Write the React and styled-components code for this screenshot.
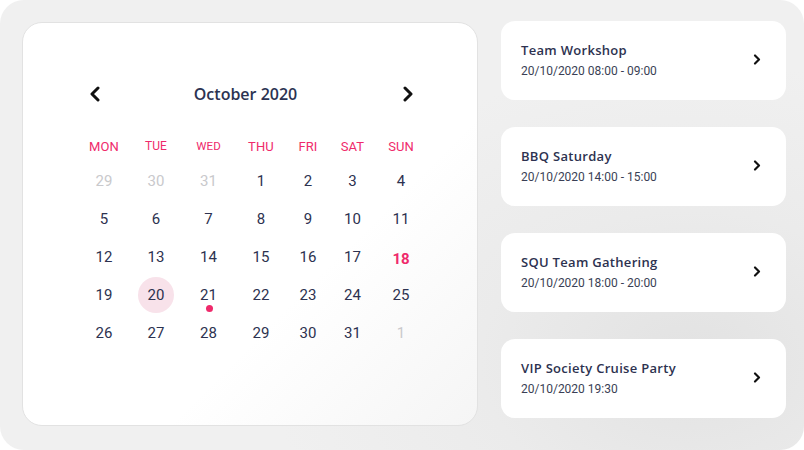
import React from "react";
import styled, { createGlobalStyle, css } from "styled-components";

const GlobalStyle = createGlobalStyle`
  html, body {
    margin: 0;
    padding: 0;
    background: #ffffff;
  }
  * {
    box-sizing: border-box;
  }
`;

const Shell = styled.div`
  width: 804px;
  height: 450px;
  border-radius: 24px;
  display: flex;
  gap: 23px;
  padding: 21px 18px 0 22px;
  background: radial-gradient(
      ellipse 420px 300px at 690px 360px,
      #e2e2e2 0%,
      #ebebeb 50%,
      #f0f0f0 100%
    ),
    #f0f0f0;
  overflow: hidden;
`;

const CalendarCard = styled.div`
  width: 456px;
  height: 404px;
  margin-top: 1px;
  border-radius: 20px;
  border: 1px solid #e2e2e2;
  background: linear-gradient(135deg, #ffffff 0%, #ffffff 64%, #f5f5f5 100%);
  padding: 59px 52px 0 55px;
  display: flex;
  flex-direction: column;
`;

const Header = styled.div`
  display: flex;
  align-items: center;
  justify-content: space-between;
  height: 24px;
  padding: 0 11px 0 11px;
`;

const MonthTitle = styled.div`
  font-family: "Open Sans", "Noto Sans", sans-serif;
  font-weight: 600;
  font-size: 16px;
  color: #2c3352;
  margin-right: 12px;
`;

const NavButton = styled.div`
  width: 12px;
  height: 16px;
  display: flex;
  align-items: center;
  justify-content: center;
`;

const Grid = styled.div`
  display: grid;
  grid-template-columns: 52px 52px 53px 52px 42px 47px 50px;
`;

const WeekRow = styled(Grid)`
  margin-top: 30px;
  height: 20px;
  align-items: center;
`;

const WeekDay = styled.div`
  text-align: center;
  font-family: Roboto, "Liberation Sans", sans-serif;
  font-size: ${(p) => p.size || 13}px;
  color: #ef2a6b;
  letter-spacing: 0.1px;
`;

const DateGrid = styled(Grid)`
  margin-top: 6px;
  grid-auto-rows: 38px;
`;

const DateCell = styled.div`
  position: relative;
  display: flex;
  align-items: center;
  justify-content: center;
  font-family: Roboto, "Liberation Sans", sans-serif;
  font-size: 15px;
  color: #2d3250;

  ${(p) =>
    p.muted &&
    css`
      color: #c9c9cc;
    `}

  ${(p) =>
    p.today &&
    css`
      color: #ef2a6b;
      font-weight: 700;
      padding-top: 3px;
    `}
`;

const Selected = styled.span`
  width: 36px;
  height: 36px;
  border-radius: 50%;
  background: #f8e2ea;
  display: flex;
  align-items: center;
  justify-content: center;
`;

const EventDot = styled.span`
  position: absolute;
  left: 50%;
  top: 29px;
  width: 7px;
  height: 7px;
  margin-left: -3px;
  border-radius: 50%;
  background: #ef2a6b;
`;

const EventList = styled.div`
  width: 285px;
  display: flex;
  flex-direction: column;
  gap: 27px;
`;

const EventCard = styled.div`
  height: 79px;
  border-radius: 14px;
  background: #ffffff;
  display: flex;
  align-items: center;
  justify-content: space-between;
  padding: 0 25px 2px 20px;
`;

const EventText = styled.div`
  display: flex;
  flex-direction: column;
  gap: 5px;
`;

const EventTitle = styled.div`
  font-family: "Open Sans", "Noto Sans", sans-serif;
  font-weight: 600;
  font-size: 13px;
  color: #2d3250;
  letter-spacing: 0.3px;
`;

const EventTime = styled.div`
  font-family: Roboto, "Liberation Sans", sans-serif;
  font-size: 12px;
  color: #3a3f55;
`;

const Chevron = ({ dir = "right", w = 12, h = 16, sw = 3 }) => (
  <svg width={w} height={h} viewBox="0 0 12 16" fill="none">
    <path
      d={dir === "left" ? "M9 2L3 8l6 6" : "M3 2l6 6-6 6"}
      stroke="#111111"
      strokeWidth={sw}
      strokeLinecap="round"
      strokeLinejoin="round"
    />
  </svg>
);

const weekDays = [
  { label: "MON", size: 13 },
  { label: "TUE", size: 12 },
  { label: "WED", size: 11.5 },
  { label: "THU", size: 13 },
  { label: "FRI", size: 13 },
  { label: "SAT", size: 13 },
  { label: "SUN", size: 13 },
];

const days = [
  { d: 29, muted: true },
  { d: 30, muted: true },
  { d: 31, muted: true },
  ...Array.from({ length: 31 }, (_, i) => ({ d: i + 1 })),
  { d: 1, muted: true },
];

const events = [
  { title: "Team Workshop", time: "20/10/2020 08:00 - 09:00" },
  { title: "BBQ Saturday", time: "20/10/2020 14:00 - 15:00" },
  { title: "SQU Team Gathering", time: "20/10/2020 18:00 - 20:00" },
  { title: "VIP Society Cruise Party", time: "20/10/2020 19:30" },
];

export default function App() {
  return (
    <>
      <GlobalStyle />
      <Shell>
        <CalendarCard>
          <Header>
            <NavButton>
              <Chevron dir="left" />
            </NavButton>
            <MonthTitle>October 2020</MonthTitle>
            <NavButton>
              <Chevron dir="right" />
            </NavButton>
          </Header>
          <WeekRow>
            {weekDays.map((w) => (
              <WeekDay key={w.label} size={w.size}>
                {w.label}
              </WeekDay>
            ))}
          </WeekRow>
          <DateGrid>
            {days.map((day, i) => {
              const current = !day.muted;
              return (
                <DateCell
                  key={i}
                  muted={day.muted}
                  today={current && day.d === 18}
                >
                  {current && day.d === 20 ? (
                    <Selected>{day.d}</Selected>
                  ) : (
                    day.d
                  )}
                  {current && day.d === 21 && <EventDot />}
                </DateCell>
              );
            })}
          </DateGrid>
        </CalendarCard>
        <EventList>
          {events.map((e) => (
            <EventCard key={e.title}>
              <EventText>
                <EventTitle>{e.title}</EventTitle>
                <EventTime>{e.time}</EventTime>
              </EventText>
              <Chevron w={8} h={11} sw={3.2} />
            </EventCard>
          ))}
        </EventList>
      </Shell>
    </>
  );
}
